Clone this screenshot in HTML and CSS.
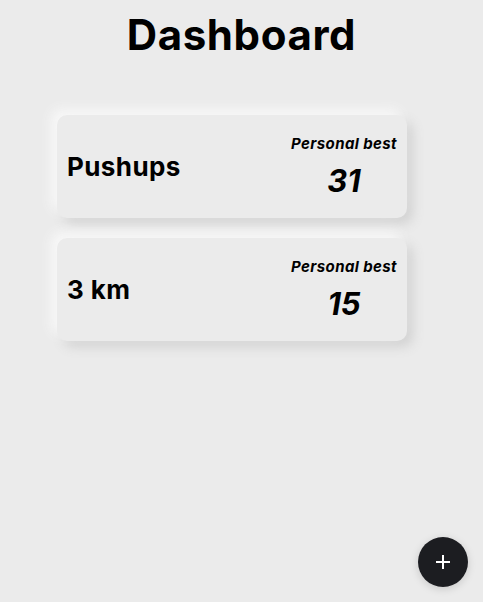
FILE: index.html
```html
<!DOCTYPE html>
<html>
<head>
<meta charset="utf-8">
<link rel="stylesheet" href="styles.css">
</head>
<body>
<div class="page">
  <h1 class="title">Dashboard</h1>
  <div class="list">
    <div class="card">
      <div class="name">Pushups</div>
      <div class="best">
        <div class="best-label">Personal best</div>
        <div class="best-value">31</div>
      </div>
    </div>
    <div class="card">
      <div class="name">3 km</div>
      <div class="best">
        <div class="best-label">Personal best</div>
        <div class="best-value">15</div>
      </div>
    </div>
  </div>
</div>
<button class="fab" aria-label="Add">
  <svg width="16" height="16" viewBox="0 0 16 16"><path d="M8 1v14M1 8h14" stroke="#fff" stroke-width="2" fill="none"/></svg>
</button>
</body>
</html>
```
FILE: styles.css
```css
html, body {
  margin: 0;
  padding: 0;
  background: #ebebeb;
  font-family: Inter, "Liberation Sans", sans-serif;
  color: #000;
}
.page {
  min-height: 602px;
  display: flex;
  flex-direction: column;
}
.title {
  margin: 10px 0 0;
  text-align: center;
  font-size: 42px;
  font-weight: 700;
  line-height: 50px;
  letter-spacing: 0.6px;
}
.list {
  display: flex;
  flex-direction: column;
  gap: 20px;
  margin: 55px 0 0 57px;
  width: 350px;
}
.card {
  height: 103px;
  box-sizing: border-box;
  padding: 0 10px;
  display: flex;
  align-items: center;
  justify-content: space-between;
  background: #ebebeb;
  border-radius: 10px;
  box-shadow: -6px -6px 12px #f8f8f8, 6px 6px 12px #d2d2d2;
}
.name {
  font-size: 26px;
  font-weight: 700;
  letter-spacing: 0.4px;
}
.best {
  display: flex;
  flex-direction: column;
  align-items: center;
  gap: 11px;
  font-style: italic;
  font-weight: 700;
}
.best-label {
  font-size: 15px;
  line-height: 18px;
  letter-spacing: 0.4px;
}
.best-value {
  font-size: 31px;
  line-height: 34px;
}
.fab {
  position: fixed;
  right: 15px;
  bottom: 15px;
  width: 50px;
  height: 50px;
  border-radius: 50%;
  border: none;
  background: #1c1d21;
  display: flex;
  align-items: center;
  justify-content: center;
  padding: 0;
  box-shadow: 0 2px 8px rgba(0,0,0,0.15);
}
```
